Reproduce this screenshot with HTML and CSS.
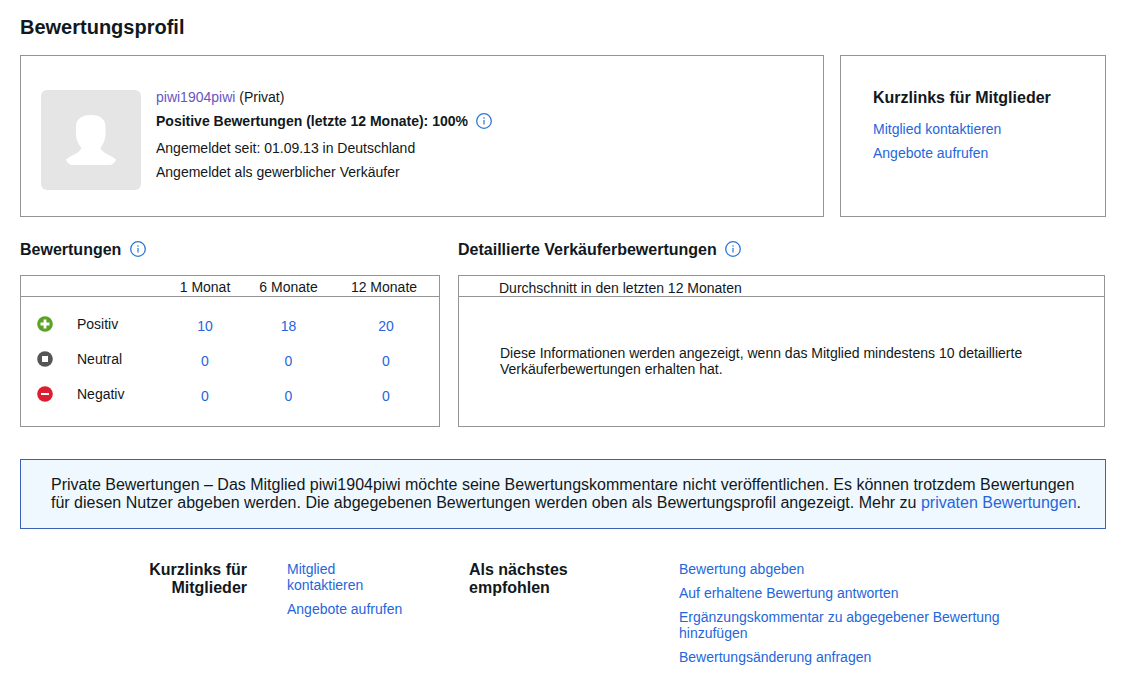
FILE: index.html
```html
<!DOCTYPE html>
<html lang="de">
<head>
<meta charset="utf-8">
<title>Bewertungsprofil</title>
<link rel="stylesheet" href="styles.css">
</head>
<body>
<svg class="sprite" aria-hidden="true">
  <symbol id="info" viewBox="0 0 16 16">
    <circle cx="8" cy="8" r="7.3" fill="none" stroke="currentColor" stroke-width="1.3"/>
    <path d="M8 7v4.5M8 4.3v1.4" fill="none" stroke="currentColor" stroke-width="1.2"/>
  </symbol>
</svg>
<main class="page">
  <h1 class="page-title">Bewertungsprofil</h1>

  <div class="top">
    <section class="card profile">
      <svg class="avatar" viewBox="0 0 100 100" role="img" aria-label="Profilbild">
        <rect width="100" height="100" rx="6" fill="#e5e5e5"/>
        <path d="M50 25C57 25 64.500 28 64.500 36V44C64.500 50 62 54 59.500 58C61 63 70 65 75 69.500C74 73 71 75 68 75H32C29 75 26 73 25 69.500C30 65 39 63 40.500 58C37.500 54 35 50 35 44V36C35 28 43 25 50 25Z" fill="#fff"/>
      </svg>
      <div class="profile-text">
        <p class="line"><a class="visited" href="#profil">piwi1904piwi</a> (Privat)</p>
        <p class="line strong">Positive Bewertungen (letzte 12 Monate): 100% <button class="info" type="button" aria-label="Info zu positiven Bewertungen"><svg><use href="#info"/></svg></button></p>
        <p class="line since">Angemeldet seit: 01.09.13 in Deutschland</p>
        <p class="line">Angemeldet als gewerblicher Verkäufer</p>
      </div>
    </section>
    <aside class="card shortcuts">
      <h2 class="heading">Kurzlinks für Mitglieder</h2>
      <ul class="links">
        <li><a href="#kontakt">Mitglied kontaktieren</a></li>
        <li><a href="#angebote">Angebote aufrufen</a></li>
      </ul>
    </aside>
  </div>

  <div class="ratings">
    <section class="rating">
      <h2 class="heading section-title">Bewertungen <button class="info" type="button" aria-label="Info zu Bewertungen"><svg><use href="#info"/></svg></button></h2>
      <div class="card panel">
        <table class="counts">
          <colgroup><col class="c-icon"><col class="c-label"><col class="c-one"><col class="c-six"><col class="c-twelve"></colgroup>
          <thead>
            <tr><td></td><td></td><th scope="col">1 Monat</th><th scope="col">6 Monate</th><th scope="col">12 Monate</th></tr>
          </thead>
          <tbody>
            <tr>
              <td><svg class="mark" viewBox="0 0 16 16"><circle cx="8" cy="8" r="7.800" fill="#5ba226"/><path d="M8 3.500v9M3.500 8h9" stroke="#fff" stroke-width="2.800"/></svg></td>
              <th scope="row">Positiv</th><td><a href="#p1">10</a></td><td><a href="#p6">18</a></td><td><a href="#p12">20</a></td>
            </tr>
            <tr>
              <td><svg class="mark" viewBox="0 0 16 16"><circle cx="8" cy="8" r="7.800" fill="#555"/><rect x="5" y="5" width="6" height="6" fill="#fff"/></svg></td>
              <th scope="row">Neutral</th><td><a href="#n1">0</a></td><td><a href="#n6">0</a></td><td><a href="#n12">0</a></td>
            </tr>
            <tr>
              <td><svg class="mark" viewBox="0 0 16 16"><circle cx="8" cy="8" r="7.800" fill="#dd1e31"/><path d="M4 8h8" stroke="#fff" stroke-width="2"/></svg></td>
              <th scope="row">Negativ</th><td><a href="#g1">0</a></td><td><a href="#g6">0</a></td><td><a href="#g12">0</a></td>
            </tr>
          </tbody>
        </table>
      </div>
    </section>
    <section class="rating">
      <h2 class="heading section-title">Detaillierte Verkäuferbewertungen <button class="info" type="button" aria-label="Info zu detaillierten Verkäuferbewertungen"><svg><use href="#info"/></svg></button></h2>
      <div class="card panel">
        <h3 class="panel-head">Durchschnitt in den letzten 12 Monaten</h3>
        <p class="panel-note">Diese Informationen werden angezeigt, wenn das Mitglied mindestens 10 detaillierte Verkäuferbewertungen erhalten hat.</p>
      </div>
    </section>
  </div>

  <p class="notice">Private Bewertungen – Das Mitglied piwi1904piwi möchte seine Bewertungskommentare nicht veröffentlichen. Es können trotzdem Bewertungen für diesen Nutzer abgeben werden. Die abgegebenen Bewertungen werden oben als Bewertungsprofil angezeigt. Mehr zu <a href="#privat">privaten Bewertungen</a>.</p>

  <footer class="footer">
    <h2 class="heading to-right">Kurzlinks für Mitglieder</h2>
    <ul class="links">
      <li><a href="#kontakt">Mitglied kontaktieren</a></li>
      <li><a href="#angebote">Angebote aufrufen</a></li>
    </ul>
    <h2 class="heading">Als nächstes empfohlen</h2>
    <ul class="links">
      <li><a href="#abgeben">Bewertung abgeben</a></li>
      <li><a href="#antworten">Auf erhaltene Bewertung antworten</a></li>
      <li><a href="#ergaenzen">Ergänzungskommentar zu abgegebener Bewertung hinzufügen</a></li>
      <li><a href="#aendern">Bewertungsänderung anfragen</a></li>
    </ul>
  </footer>
</main>
</body>
</html>
```
FILE: styles.css
```css
* { box-sizing: border-box; }
body {
  margin: 0;
  background: #fff;
  color: #111820;
  font: 14px/16px "Liberation Sans", Arial, sans-serif;
}
h1, h2, h3, p, ul { margin: 0; padding: 0; }
ul { list-style: none; }
a { color: #2566dc; text-decoration: none; }
a:hover { text-decoration: underline; }
.sprite { position: absolute; width: 0; height: 0; }
.page { padding: 15px 26px 20px 20px; }
.page-title { font-size: 20px; line-height: 24px; }
.card { border: 1px solid #949494; }
.heading { font-size: 16px; line-height: 18px; }

.top {
  display: grid;
  grid-template-columns: minmax(0, 1fr) 266px;
  gap: 16px;
  margin-top: 16px;
}
.profile { display: flex; gap: 15px; padding: 34px 20px 26px; }
.avatar { flex: none; width: 100px; height: 100px; }
.profile-text { margin-top: -5px; }
.line { line-height: 24px; }
.line.since { margin-top: 3px; }
.visited { color: #6a55c2; }
.strong { font-weight: bold; }
.info {
  width: 16px;
  height: 16px;
  margin: 0 0 0 4px;
  padding: 0;
  border: 0;
  background: none;
  color: #2b76d8;
  vertical-align: -3px;
  cursor: pointer;
}
.info svg { display: block; width: 16px; height: 16px; }
.shortcuts { padding: 33px 32px; }
.shortcuts .links { margin-top: 14px; }
.links li + li { margin-top: 8px; }

.ratings {
  display: grid;
  grid-template-columns: minmax(0, 420fr) minmax(0, 647fr);
  gap: 18px;
  margin-top: 23px;
  padding-right: 1px;
}
.rating { display: flex; flex-direction: column; }
.section-title { margin-bottom: 16px; line-height: 19px; }
.section-title .info { vertical-align: -2px; }
.panel { flex: 1; }
.counts { width: 100%; table-layout: fixed; border-collapse: collapse; margin-bottom: 13px; }
.c-icon { width: 56px; }
.c-label { width: 89px; }
.c-one { width: 78px; }
.c-six { width: 89px; }
.counts th, .counts td { padding: 0; font-weight: normal; text-align: center; }
.counts thead tr { height: 20px; border-bottom: 1px solid #949494; }
.counts thead th { padding-top: 4px; line-height: 15px; }
.counts thead th:last-child { padding-right: 4px; }
.counts tbody::before { content: ""; display: block; height: 11px; }
.counts tbody tr { height: 35px; }
.counts tbody th { text-align: left; padding-bottom: 2px; }
.counts tbody td { padding-top: 2px; }
.counts tbody td:first-child { text-align: left; padding: 0 0 2px 16px; }
.mark { display: block; width: 16px; height: 16px; }
.panel-head {
  padding: 4px 40px 0;
  border-bottom: 1px solid #949494;
  font-size: 14px;
  font-weight: normal;
  line-height: 16px;
}
.panel-note { padding: 48px 41px; }

.notice {
  margin-top: 32px;
  padding: 16px 24px 16px 30px;
  border: 1px solid #3d62b5;
  background: #f0f8ff;
  font-size: 16px;
  line-height: 18px;
}
.footer {
  display: grid;
  grid-template-columns: 127px 142px 140px minmax(0, 360px);
  column-gap: 40px;
  margin-top: 32px;
  padding-left: 100px;
}
.footer .links { padding-right: 22px; }
.footer .links:last-child { padding: 0 0 0 30px; }
.to-right { text-align: right; }
```
